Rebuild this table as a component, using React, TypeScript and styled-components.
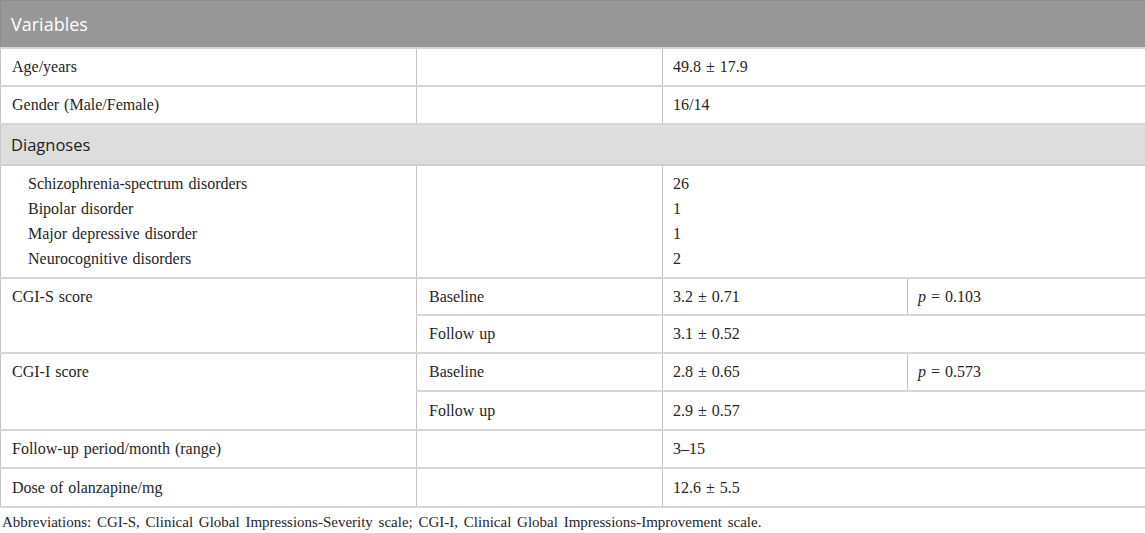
import React from "react";
import styled, { createGlobalStyle } from "styled-components";

const Global = createGlobalStyle`
  html, body { margin: 0; padding: 0; background: #ffffff; }
  body { font-family: "Liberation Serif", "Times New Roman", serif; color: #222; }
`;

const Wrap = styled.div`
  width: 1145px;
`;

const Table = styled.table`
  width: 1145px;
  border-collapse: collapse;
  table-layout: fixed;
  font-family: "Liberation Serif", "Times New Roman", serif;
  font-size: 16px;
  word-spacing: 1px;
  color: #262626;
`;

const HeadCell = styled.th`
  background: #979797;
  color: #ffffff;
  font-family: "Open Sans", "Noto Sans", sans-serif;
  font-weight: 400;
  font-size: 18px;
  word-spacing: 0;
  text-align: left;
  padding: 0 10px;
  height: 46px;
  border: 1px solid #8c8c8c;
  border-bottom: 2px solid #d4d4d4;
`;

const SectionCell = styled.td`
  background: #dcdddc;
  color: #222;
  font-family: "Open Sans", "Noto Sans", sans-serif;
  font-size: 16.5px;
  word-spacing: 0;
  padding: 0 10px;
  height: 39px;
  border-top: 2px solid #d0d0d0;
  border-bottom: 2px solid #d0d0d0;
  border-left: 1px solid #c8c8c8;
  border-right: 1px solid #c8c8c8;
`;

const Cell = styled.td<{ $pad?: number; $h?: number; $top?: boolean }>`
  padding: 0 ${(p) => p.$pad ?? 10}px;
  height: ${(p) => p.$h ?? 36}px;
  vertical-align: ${(p) => (p.$top ? "top" : "middle")};
  border-top: 2px solid #d6d6d6;
  border-bottom: 2px solid #d6d6d6;
  border-left: 1px solid #c4c4c4;
  border-right: 1px solid #c4c4c4;
  line-height: 20px;
`;

const List = styled.div<{ $indent?: number }>`
  padding: 5px 0 6px ${(p) => p.$indent ?? 0}px;
  line-height: 25px;
`;

const Italic = styled.i`
  font-style: italic;
`;

const Foot = styled.div`
  font-family: "Liberation Serif", "Times New Roman", serif;
  font-size: 15px;
  word-spacing: 2px;
  color: #262626;
  padding: 6px 0 0 2px;
`;

export default function App() {
  return (
    <Wrap>
      <Global />
      <Table>
        <colgroup>
          <col style={{ width: 416 }} />
          <col style={{ width: 246 }} />
          <col style={{ width: 245 }} />
          <col style={{ width: 238 }} />
        </colgroup>
        <thead>
          <tr>
            <HeadCell colSpan={4}>Variables</HeadCell>
          </tr>
        </thead>
        <tbody>
          <tr>
            <Cell $pad={11}>Age/years</Cell>
            <Cell />
            <Cell colSpan={2}>49.8 ± 17.9</Cell>
          </tr>
          <tr>
            <Cell $pad={11}>Gender (Male/Female)</Cell>
            <Cell />
            <Cell colSpan={2}>16/14</Cell>
          </tr>
          <tr>
            <SectionCell colSpan={4}>Diagnoses</SectionCell>
          </tr>
          <tr>
            <Cell $pad={11} $h={108} $top>
              <List $indent={16}>
                <div>Schizophrenia-spectrum disorders</div>
                <div>Bipolar disorder</div>
                <div>Major depressive disorder</div>
                <div>Neurocognitive disorders</div>
              </List>
            </Cell>
            <Cell $h={108} />
            <Cell colSpan={2} $h={108} $top>
              <List>
                <div>26</div>
                <div>1</div>
                <div>1</div>
                <div>2</div>
              </List>
            </Cell>
          </tr>
          <tr>
            <Cell $pad={11} rowSpan={2} $top>
              <List>CGI-S score</List>
            </Cell>
            <Cell $pad={12} $h={35}>Baseline</Cell>
            <Cell $h={35}>3.2 ± 0.71</Cell>
            <Cell $h={35}>
              <Italic>p</Italic> = 0.103
            </Cell>
          </tr>
          <tr>
            <Cell $pad={12}>Follow up</Cell>
            <Cell colSpan={2}>3.1 ± 0.52</Cell>
          </tr>
          <tr>
            <Cell $pad={11} rowSpan={2} $top>
              <List>CGI-I score</List>
            </Cell>
            <Cell $pad={12}>Baseline</Cell>
            <Cell>2.8 ± 0.65</Cell>
            <Cell>
              <Italic>p</Italic> = 0.573
            </Cell>
          </tr>
          <tr>
            <Cell $pad={12} $h={37}>Follow up</Cell>
            <Cell colSpan={2} $h={37}>2.9 ± 0.57</Cell>
          </tr>
          <tr>
            <Cell $pad={11}>Follow-up period/month (range)</Cell>
            <Cell />
            <Cell colSpan={2}>3–15</Cell>
          </tr>
          <tr>
            <Cell $pad={11} $h={37}>Dose of olanzapine/mg</Cell>
            <Cell $h={37} />
            <Cell colSpan={2} $h={37}>12.6 ± 5.5</Cell>
          </tr>
        </tbody>
      </Table>
      <Foot>
        Abbreviations: CGI-S, Clinical Global Impressions-Severity scale; CGI-I, Clinical Global Impressions-Improvement scale.
      </Foot>
    </Wrap>
  );
}
